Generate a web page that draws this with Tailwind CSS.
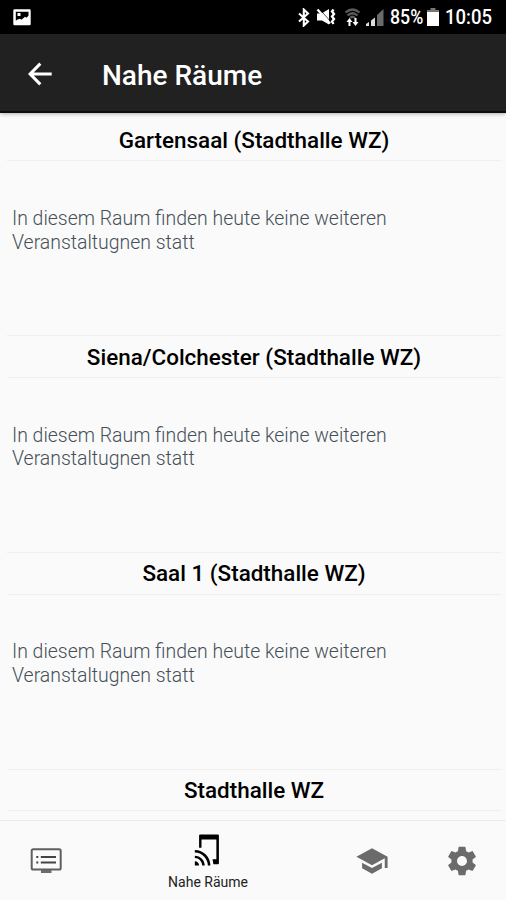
<!DOCTYPE html>
<html lang="de">
<head>
<meta charset="utf-8">
<title>Nahe Räume</title>
<script src="https://cdn.jsdelivr.net/npm/@tailwindcss/browser@4"></script>
</head>
<body class="h-[900px] w-[506px] overflow-hidden bg-[#fafafa] font-['Roboto',sans-serif] text-black">
<div class="flex h-full flex-col">
  <div class="flex h-[34px] shrink-0 items-center bg-black pl-[13px] pr-[14px] text-white">
    <svg class="h-[17px] w-[18px]" viewBox="0 0 18 17"><path fill="#fff" fill-rule="evenodd" d="M1.500 .3h15a1.200 1.200 0 0 1 1.200 1.200v13.500a1.200 1.200 0 0 1-1.200 1.200h-15A1.200 1.200 0 0 1 .3 15V1.500A1.200 1.200 0 0 1 1.500 .3zM2.800 2.800v9l1.200-1 3-1 1.500 1 3.500-3 1.500 1 2-2V2.800zM4.500 4h3v3h-3z"/></svg>
    <svg class="ml-auto h-[19px] w-[14px]" viewBox="0 0 14 19"><path fill="none" stroke="#fff" stroke-width="2.100" d="M2 5.500l9 8-4.200 4V1.500l4.200 4L2 13.500"/></svg>
    <svg class="ml-[5px] h-[18px] w-[20px]" viewBox="0 0 20 18"><path fill="#fff" d="M1 5.500h4.500L13 1v15.500L6 12.500H1z"/><path stroke="#000" stroke-width=".7" d="M3.500 1l11 12.500"/><path stroke="#fff" stroke-width="2.300" d="M1.500 1.500l12.500 14"/><path fill="none" stroke="#fff" stroke-width="2.300" d="M17.500 1.500l-1.500 2 2 2.500-2 2.500 2 2.500-2 2.500 1.500 2.500"/></svg>
    <svg class="ml-[8px] h-[19px] w-[17px]" viewBox="0 0 17 19"><g fill="none" stroke="#5c5c5c" stroke-width="2.200"><path d="M1.500 4.500q7-6 14 0M3.500 7.500q5-4.500 10 0M6 10q2.500-2.500 5 0"/></g><path fill="#fff" d="M5.500 10l3 4h-2V18h-2v-4h-2zM11.500 18l-3-4h2v-4h2v4h2z"/></svg>
    <svg class="ml-[5px] h-[19px] w-[18px]" viewBox="0 0 18 19"><path fill="#ddd" d="M0 16l3-2v4H0zM5 12.500l4-3V18H5z"/><path fill="#6a6a6a" d="M11 7l6.500-6v17H11z"/></svg>
    <span class="ml-[6px] w-[34px] whitespace-nowrap text-[19.500px] leading-[34px] font-medium"><span class="inline-block origin-left scale-x-[.91] pt-[2px]">85%</span></span>
    <svg class="ml-[3px] h-[19px] w-[12px]" viewBox="0 0 12 19"><path fill="#777" d="M3.500 0h5v2H12v3H0V2h3.500z"/><path fill="#fff" d="M0 4h12v14H0z"/></svg>
    <span class="ml-[6px] w-[47px] whitespace-nowrap pt-[2px] text-[19.500px] font-medium"><span class="inline-block origin-left scale-x-[.95]">10:05</span></span>
  </div>
  <header class="z-10 flex h-[79px] shrink-0 items-center border-b-2 border-[#0d0d0d] bg-[#212121] pl-[22px] shadow-[0_1px_4px_rgba(0,0,0,.3)]">
    <svg class="mt-[2px] h-[36px] w-[36px]" viewBox="0 0 24 24"><path fill="#fff" d="M19.800 11H7.830l5.100-5.200L11.500 4.400 4 12l7.500 7.600 1.430-1.400L7.830 13H19.800v-2z"/></svg>
    <h1 class="ml-[44px] mt-[6px] text-[28px] leading-[40px] font-medium text-white">Nahe Räume</h1>
  </header>
  <main class="min-h-0 flex-1 overflow-hidden pl-[7px] pr-[5px]">
    <section class="h-[222px]">
      <h2 class="h-[48px] border-b border-[#efefef] pt-[12px] text-center text-[22.450px] leading-[30px] font-medium">Gartensaal (Stadthalle WZ)</h2>
      <p class="pl-[5px] pt-[46px] text-[19.450px] leading-[23.500px] font-light text-[#455058]">In diesem Raum finden heute keine weiteren<br>Veranstaltugnen statt</p>
    </section>
    <section class="h-[217px] border-t border-[#efefef]">
      <h2 class="h-[42px] border-b border-[#efefef] pt-[6px] text-center text-[22.450px] leading-[30px] font-medium">Siena/Colchester (Stadthalle WZ)</h2>
      <p class="pl-[5px] pt-[46px] text-[19.450px] leading-[23.400px] font-light text-[#455058]">In diesem Raum finden heute keine weiteren<br>Veranstaltugnen statt</p>
    </section>
    <section class="h-[217px] border-t border-[#efefef]">
      <h2 class="h-[42px] border-b border-[#efefef] pt-[5px] text-center text-[22.450px] leading-[30px] font-medium">Saal 1 (Stadthalle WZ)</h2>
      <p class="pl-[5px] pt-[45px] text-[19.450px] leading-[23.500px] font-light text-[#455058]">In diesem Raum finden heute keine weiteren<br>Veranstaltugnen statt</p>
    </section>
    <section class="border-t border-[#efefef]">
      <h2 class="h-[41px] border-b border-[#efefef] pt-[5px] text-center text-[22.450px] leading-[30px] font-medium">Stadthalle WZ</h2>
    </section>
  </main>
  <nav class="flex h-[80px] shrink-0 border-t border-[#ececec] bg-[#fafafa] text-[#6b6b6b]">
    <div class="flex w-[91px] items-center justify-center"><svg class="h-[34px] w-[34px]" viewBox="0 0 34 34"><rect x="2.700" y="5.200" width="29" height="20.300" rx="1.600" fill="none" stroke="#5f5f5f" stroke-width="2"/><path fill="#6b6b6b" d="M12 26h10.500v3H12z"/><path fill="#444" d="M7.300 12h2v2h-2zM11.800 12h15.200v2H11.800zM7.300 17.500h2v2h-2zM11.800 17.500h15.200v2H11.800z"/></svg></div>
    <div class="flex w-[234px] flex-col items-center pt-[12px] text-black">
      <svg class="ml-[1px] h-[34px] w-[34px]" viewBox="0 0 24 24"><path fill="currentColor" d="M2 16v1.700c2.760 0 5.200 2.540 5.200 5.300H9c0-3.870-3.130-7-7-7zm0 4v3h3c0-1.660-1.340-3-3-3zm0-8v1.700c4.970 0 9.200 4.330 9.200 9.300H13c0-6.080-4.920-11-11-11zM18.500 1h-13l-.5.5v8.900h1.700V4.500h10.500v14H14.500l.6 3.500h3.400l.5-.5v-20z"/></svg>
      <span class="mt-[5px] text-[14px] leading-[20px] text-[#222]">Nahe Räume</span>
    </div>
    <div class="flex w-[93px] items-center justify-center"><svg class="h-[34px] w-[34px]" viewBox="0 0 24 24"><path fill="currentColor" d="M5 13.180v4L12 21l7-3.820v-4L12 17l-7-3.820zM12 3L1 9l11 6 9-4.910V17h2V9L12 3z"/></svg></div>
    <div class="flex w-[87px] items-center justify-center"><svg class="h-[34px] w-[34px]" viewBox="0 0 24 24"><path fill="currentColor" d="M19.430 12.980c.04-.32.07-.64.07-.98s-.03-.66-.07-.98l2.110-1.650c.19-.15.24-.42.12-.64l-2-3.460c-.12-.22-.39-.3-.61-.22l-2.490 1c-.52-.4-1.080-.73-1.690-.98l-.38-2.650C14.460 2.180 14.250 2 14 2h-4c-.25 0-.46.18-.49.42l-.38 2.650c-.61.25-1.170.59-1.690.98l-2.490-1c-.23-.09-.49 0-.61.22l-2 3.460c-.13.22-.07.49.12.64l2.110 1.650c-.04.32-.07.65-.07.98s.03.66.07.98l-2.110 1.650c-.19.15-.24.42-.12.64l2 3.460c.12.22.39.3.61.22l2.490-1c.52.4 1.080.73 1.690.98l.38 2.650c.03.24.24.42.49.42h4c.25 0 .46-.18.49-.42l.38-2.650c.61-.25 1.170-.59 1.690-.98l2.490 1c.23.09.49 0 .61-.22l2-3.460c.12-.22.07-.49-.12-.64l-2.110-1.650zM12 15.500c-1.930 0-3.500-1.570-3.500-3.500s1.570-3.500 3.500-3.500 3.500 1.570 3.500 3.500-1.570 3.500-3.500 3.500z"/></svg></div>
  </nav>
</div>
</body>
</html>
